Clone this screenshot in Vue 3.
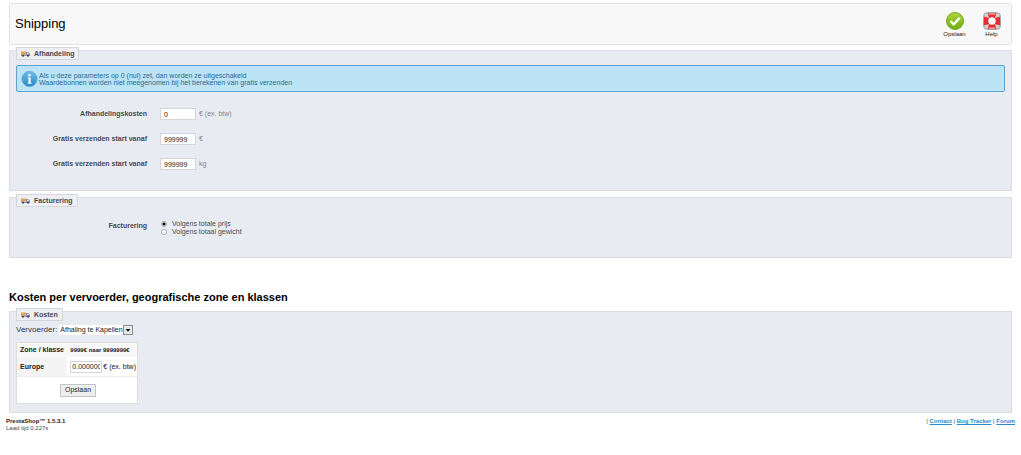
<script setup>
import { ref } from 'vue'

const handling = ref([
  { id: 'handling-cost', label: 'Afhandelingskosten', value: '0', unit: '€ (ex. btw)' },
  { id: 'free-price', label: 'Gratis verzenden start vanaf', value: '999999', unit: '€' },
  { id: 'free-weight', label: 'Gratis verzenden start vanaf', value: '999999', unit: 'kg' },
])
const billing = ref('price')
const zoneCost = ref('0.000000')
</script>

<template>
  <svg class="defs" aria-hidden="true">
    <symbol id="truck" viewBox="0 0 9 7">
      <rect x="0" y="1" width="5" height="4" fill="#d9a565" />
      <rect x="0" y="1" width="5" height="1" fill="#efcb95" />
      <path d="M5 2h2.2L9 3.8V6H5z" fill="#8295bb" />
      <path d="M6 2.7h1L8 4H6z" fill="#e1eaf5" />
      <rect x="0" y="5" width="9" height="0.7" fill="#737b8c" />
      <circle cx="2" cy="5.7" r="1" fill="#41454f" />
      <circle cx="7" cy="5.7" r="1" fill="#41454f" />
    </symbol>
  </svg>

  <header class="toolbar">
    <h1>Shipping</h1>
    <div class="actions">
      <button type="button" class="action">
        <svg viewBox="0 0 20 20" aria-hidden="true">
          <defs>
            <linearGradient id="green" x2="0" y2="1">
              <stop offset="0" stop-color="#acd43d" />
              <stop offset="1" stop-color="#70ad0c" />
            </linearGradient>
          </defs>
          <circle cx="10" cy="10" r="8.5" fill="url(#green)" stroke="#7ba928" />
          <path d="M5.5 10.2l3.2 3.1 6-6.4" fill="none" stroke="#fff" stroke-width="2.4" />
        </svg>
        Opslaan
      </button>
      <button type="button" class="action">
        <svg viewBox="0 0 20 20" aria-hidden="true">
          <rect x="1.5" y="1.5" width="17" height="17" rx="4" fill="#d2d2d2" stroke="#a5a5a5" />
          <path d="M5.5 2h9L13 7H7zM5.5 18h9L13 13H7zM2 5.5v9L7 13V7zM18 5.5v9L13 13V7z" fill="#e62e32" />
          <path d="M6.5 2h7v1.8h-7zM6.5 16.2h7V18h-7z" fill="#f08a8a" />
          <circle cx="10" cy="10" r="3.7" fill="#fff" />
        </svg>
        Help
      </button>
    </div>
  </header>

  <main>
    <fieldset class="panel handling">
      <legend><svg class="truck" aria-hidden="true"><use href="#truck" /></svg>Afhandeling</legend>
      <div class="body">
        <div class="hint">
          <svg viewBox="0 0 18 18" aria-hidden="true">
            <defs>
              <linearGradient id="blue" x2="0" y2="1">
                <stop offset="0" stop-color="#70bde8" />
                <stop offset="1" stop-color="#218ac5" />
              </linearGradient>
            </defs>
            <circle cx="9" cy="9" r="8" fill="url(#blue)" stroke="#60a8d0" />
            <circle cx="9" cy="5" r="1.4" fill="#fff" />
            <path d="M7 7.5h3.2V13h1v1H7v-1h1V8.5H7z" fill="#fff" />
          </svg>
          <p>
            Als u deze parameters op 0 (nul) zet, dan worden ze uitgeschakeld<br>
            Waardebonnen worden niet meegenomen bij het berekenen van gratis verzenden
          </p>
        </div>
        <div v-for="field in handling" :key="field.id" class="row">
          <label :for="field.id">{{ field.label }}</label>
          <input :id="field.id" v-model="field.value" type="text">
          <span class="unit">{{ field.unit }}</span>
        </div>
      </div>
    </fieldset>

    <fieldset class="panel billing">
      <legend><svg class="truck" aria-hidden="true"><use href="#truck" /></svg>Facturering</legend>
      <div class="body row">
        <span class="caption">Facturering</span>
        <div class="choices">
          <label><input v-model="billing" type="radio" name="billing" value="price">Volgens totale prijs</label>
          <label><input v-model="billing" type="radio" name="billing" value="weight">Volgens totaal gewicht</label>
        </div>
      </div>
    </fieldset>

    <h2>Kosten per vervoerder, geografische zone en klassen</h2>

    <fieldset class="panel costs">
      <legend><svg class="truck" aria-hidden="true"><use href="#truck" /></svg>Kosten</legend>
      <div class="body">
        <div class="carrier">
          <label for="carrier">Vervoerder:</label>
          <span class="select">
            <select id="carrier"><option>Afhaling te Kapellen</option></select>
            <svg viewBox="0 0 10 10" aria-hidden="true">
              <rect x="0.5" y="0.5" width="9" height="9" fill="#e8e8e8" stroke="#8c8c8c" />
              <path d="M2.5 4h5L5 6.7z" fill="#111" />
            </svg>
          </span>
        </div>
        <table>
          <tbody>
            <tr class="head">
              <th scope="col">Zone / klasse</th>
              <th scope="col" class="range">9999€ naar 9999999€</th>
            </tr>
            <tr class="zone">
              <th scope="row"><label for="zone-cost">Europe</label></th>
              <td><div class="cost"><input id="zone-cost" v-model="zoneCost" type="text">€ (ex. btw)</div></td>
            </tr>
            <tr class="submit">
              <td colspan="2"><button type="button">Opslaan</button></td>
            </tr>
          </tbody>
        </table>
      </div>
    </fieldset>
  </main>

  <footer>
    <div><strong>PrestaShop™ 1.5.3.1</strong><br>Laad tijd 0.227s</div>
    <nav>| <a href="#contact">Contact</a> | <a href="#bugs">Bug Tracker</a> | <a href="#forum">Forum</a></nav>
  </footer>
</template>

<style>
body {
  background: #fff;
  color: #494950;
  font: 7px/8px "Liberation Sans", Arial, sans-serif;
}
</style>

<style scoped>
.defs {
  position: absolute;
  width: 0;
  height: 0;
}
input,
select,
button {
  box-sizing: border-box;
  margin: 0;
  font: inherit;
  color: #222;
}
.toolbar {
  display: flex;
  align-items: center;
  justify-content: space-between;
  box-sizing: border-box;
  min-height: 42px;
  margin: 3px 9px 0;
  padding: 0 3px 0 5px;
  border: 1px solid #e4e4e4;
  border-radius: 2px;
  background: #f8f8f8;
}
h1 {
  margin: 0;
  color: #000;
  font-size: 13px;
  line-height: 16px;
  font-weight: normal;
}
.actions {
  display: flex;
  gap: 4px;
}
.action {
  display: flex;
  flex-direction: column;
  align-items: center;
  width: 33px;
  padding: 0;
  border: 0;
  background: none;
  font-size: 6px;
  line-height: 7px;
}
.action svg {
  width: 20px;
  height: 20px;
}
.panel {
  min-width: 0;
  margin: 0 9px;
  padding: 0 6px;
  border: 1px solid #dcdce3;
  background: #e9ebf3;
}
.handling {
  margin-top: 5px;
  padding-bottom: 20px;
}
.billing {
  margin-top: 6px;
  padding-bottom: 21px;
}
.costs {
  padding-bottom: 8px;
}
legend {
  float: left;
  display: flex;
  align-items: center;
  gap: 4px;
  height: 11px;
  margin-top: -4px;
  padding: 0 4px;
  border: 1px solid #d5d5dc;
  background: #eeeff3;
  font-weight: bold;
}
.truck {
  width: 9px;
  height: 7px;
}
.body {
  clear: both;
}
.hint {
  display: flex;
  align-items: center;
  gap: 1px;
  min-height: 25px;
  margin: 0 0 16px;
  padding-left: 4px;
  border: 1px solid #62a3cd;
  border-radius: 2px;
  background: #bde3f6;
  color: #286a91;
}
.handling .body {
  padding-top: 5px;
}
.hint svg {
  width: 17px;
  height: 18px;
}
.hint p {
  margin: 0;
  line-height: 7px;
}
.row {
  display: flex;
  align-items: center;
}
.row > label,
.caption {
  width: 131px;
  margin-right: 13px;
  font-weight: bold;
  text-align: right;
}
.handling .row {
  height: 12px;
  margin-bottom: 13px;
}
.handling .row:last-child {
  margin-bottom: 0;
}
input[type="text"] {
  width: 36px;
  height: 12px;
  padding: 0 3px;
  border: 1px solid #d5d5d9;
  background: #fff;
}
.unit {
  margin-left: 3px;
  color: #85858c;
}
.billing .row {
  align-items: flex-start;
  padding-top: 13px;
}
.caption {
  padding-top: 2px;
}
.choices label {
  display: flex;
  align-items: center;
}
input[type="radio"] {
  appearance: none;
  width: 6px;
  height: 6px;
  margin: 0 5px 0 1px;
  border: 1px solid #aaa;
  border-radius: 50%;
  background: #fff;
}
input[type="radio"]:checked {
  background: radial-gradient(circle, #000 1px, #fff 2px);
}
h2 {
  margin: 33px 9px 7px;
  color: #000;
  font-size: 11px;
  line-height: 13px;
}
.costs .body {
  padding-top: 4px;
}
.carrier {
  display: flex;
  align-items: center;
  gap: 2px;
  height: 10px;
  margin-bottom: 7px;
}
.carrier label {
  color: #333;
  font-size: 8px;
}
.select {
  display: flex;
  align-items: center;
  width: 74px;
  background: #fff;
  position: relative;
}
select {
  appearance: none;
  width: 100%;
  height: 10px;
  padding: 0 1px;
  border: 0;
  border-radius: 0;
  background: #fff;
}
.select svg {
  position: absolute;
  right: 0;
  width: 10px;
  height: 10px;
  pointer-events: none;
}
table {
  width: 122px;
  border: 1px solid #deded9;
  border-collapse: separate;
  border-spacing: 0;
  background: #fff;
  color: #222;
}
th,
td {
  padding: 0 1px 0 3px;
  text-align: left;
  white-space: nowrap;
}
.head th {
  height: 14px;
  background: #f7f7f7;
}
.head th:first-child {
  width: 48px;
}
.head .range {
  font-size: 6px;
}
.zone th {
  height: 19px;
  background: #f4f4f4;
}
.zone th,
.zone td {
  border-bottom: 1px solid #eee;
}
.cost {
  display: flex;
  align-items: center;
  gap: 1px;
}
.cost input[type="text"] {
  width: 32px;
  padding: 0 1px;
}
.submit td {
  height: 26px;
  text-align: center;
}
.submit button {
  height: 13px;
  padding: 0 4px;
  border: 1px solid #c4c4c4;
  background: #eee;
}
footer {
  display: flex;
  justify-content: space-between;
  margin: 5px 6px 0;
  font-size: 6px;
  line-height: 7px;
}
footer strong {
  color: #222;
}
footer a {
  color: #268ccd;
  font-weight: bold;
}
</style>
